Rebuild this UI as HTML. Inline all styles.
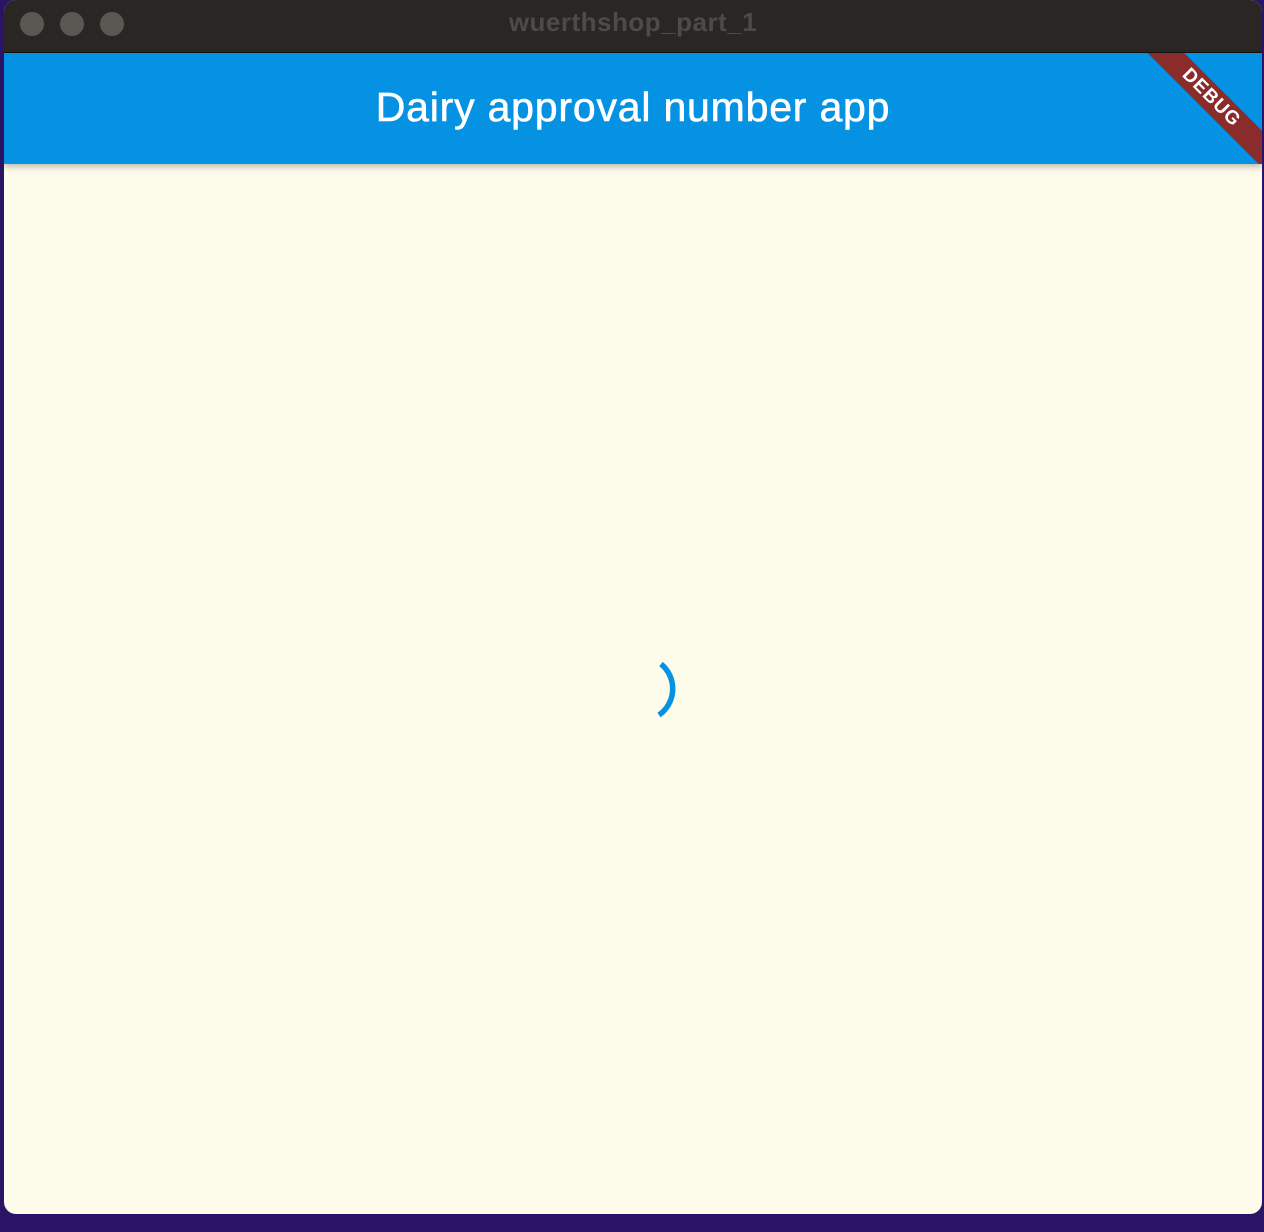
<!DOCTYPE html>
<html><head><style>
html,body{margin:0;padding:0;width:1264px;height:1232px;overflow:hidden;background:#2b1466;}
.win{position:absolute;left:4px;top:0;width:1258px;height:1214px;border-radius:12px;overflow:hidden;background:#fdfbea;}
.tb{position:absolute;left:0;top:0;width:100%;height:52px;background:#2a2623;border-bottom:1px solid #111;}
.dot{position:absolute;top:12px;width:24px;height:24px;border-radius:50%;background:#5a5652;}
.title{position:absolute;left:0;right:0;top:7px;text-align:center;font:bold 26px "Liberation Sans",sans-serif;color:#4d4a47;letter-spacing:0.5px;}
.bar{position:absolute;left:0;top:53px;width:100%;height:111px;background:#0592e3;box-shadow:0 3px 6px rgba(0,0,0,0.25);overflow:hidden;}
.h{position:absolute;left:0;right:0;top:31px;text-align:center;font:41px "Liberation Sans",sans-serif;color:#fff;letter-spacing:0.8px;-webkit-text-stroke:0.6px #fff;}
.ribbon{position:absolute;right:-44px;top:32px;width:190px;height:26px;background:#8a2c2c;transform:rotate(45deg);text-align:center;font:bold 19px "Liberation Sans",sans-serif;color:#fff;line-height:26px;letter-spacing:1px;}
</style></head><body>
<div class="win">
<div class="tb"><div class="dot" style="left:16px"></div><div class="dot" style="left:56px"></div><div class="dot" style="left:96px"></div><div class="title">wuerthshop_part_1</div></div>
<div class="bar"><div class="h">Dairy approval number app</div><div class="ribbon">DEBUG</div></div>
<svg style="position:absolute;left:0;top:0" width="1258" height="1214"><path d="M657 664 A32 32 0 0 1 655 715" stroke="#0592e3" stroke-width="5.5" fill="none"/></svg>
</div>
</body></html>
